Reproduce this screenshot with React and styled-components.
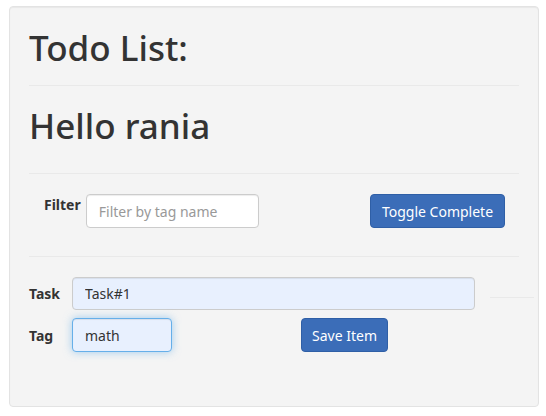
import React from "react";
import styled, { createGlobalStyle, css } from "styled-components";

const GlobalStyle = createGlobalStyle`
  body {
    margin: 0;
    background: #fff;
    font-family: "Noto Sans", "Open Sans", sans-serif;
    color: #333;
    font-size: 14px;
  }
  * { box-sizing: border-box; }
`;

const Well = styled.div`
  margin: 6px 7px 0 9px;
  height: 401px;
  padding: 0 19px;
  background: #f4f4f4;
  border: 1px solid #e3e3e3;
  border-radius: 4px;
  box-shadow: inset 0 1px 1px rgba(0, 0, 0, 0.05);
`;

const Heading = styled.h1`
  margin: 0;
  padding: ${(p) => p.$top}px 0 0;
  height: ${(p) => p.$height}px;
  font-size: 35px;
  font-weight: 500;
  line-height: 40px;
  color: #333;
`;

const Rule = styled.hr`
  margin: 0;
  border: 0;
  border-top: 1px solid #e9e9e9;
`;

const FilterRow = styled.div`
  display: flex;
  align-items: flex-start;
  height: 82px;
  padding: 20px 14px 0 15px;
`;

const FilterLabel = styled.label`
  font-weight: 700;
  font-size: 14px;
  line-height: 20px;
  padding-top: 1px;
  margin-right: 5px;
`;

const Input = styled.input`
  flex-shrink: 0;
  height: ${(p) => p.$height || 34}px;
  width: ${(p) => p.$width}px;
  padding: 6px 12px;
  font: inherit;
  font-size: 14px;
  color: #333;
  background: ${(p) => (p.$filled ? "#e8f0fe" : "#fff")};
  border: 1px solid #ccc;
  border-radius: 4px;
  outline: none;
  box-shadow: inset 0 1px 1px rgba(0, 0, 0, 0.075);
  &::placeholder {
    color: #999;
  }
  ${(p) =>
    p.$focused &&
    css`
      border-color: #66afe9;
      box-shadow: inset 0 1px 1px rgba(0, 0, 0, 0.075),
        0 0 8px rgba(102, 175, 233, 0.6);
    `}
`;

const Button = styled.button`
  flex-shrink: 0;
  width: ${(p) => p.$width}px;
  height: 34px;
  padding: 6px 0;
  margin-left: ${(p) => p.$offset || 0}px;
  font: inherit;
  font-size: 14px;
  color: #fff;
  background: #3b6db8;
  border: 1px solid #2f5fa6;
  border-radius: 4px;
  cursor: pointer;
`;

const Spacer = styled.div`
  flex: 1;
`;

const Form = styled.div`
  padding-top: 20px;
  display: flex;
  flex-direction: column;
  gap: 8px;
`;

const FormRow = styled.div`
  display: flex;
  align-items: center;
`;

const FieldLabel = styled.label`
  flex-shrink: 0;
  width: 43px;
  font-weight: 700;
  font-size: 14px;
`;

const SideRule = styled.div`
  flex-shrink: 0;
  width: 44px;
  margin-left: 15px;
  border-top: 1px solid #e9e9e9;
  align-self: center;
  margin-top: 8px;
`;

export default function App() {
  return (
    <>
      <GlobalStyle />
      <Well>
        <Heading $top={21} $height={78}>Todo List:</Heading>
        <Rule />
        <Heading $top={20} $height={87}>Hello rania</Heading>
        <Rule />
        <FilterRow>
          <FilterLabel>Filter</FilterLabel>
          <Input $width={173} placeholder="Filter by tag name" />
          <Spacer />
          <Button $width={135}>Toggle Complete</Button>
        </FilterRow>
        <Rule />
        <Form>
          <FormRow>
            <FieldLabel>Task</FieldLabel>
            <Input $width={403} $height={33} $filled defaultValue="Task#1" />
            <SideRule />
          </FormRow>
          <FormRow>
            <FieldLabel>Tag</FieldLabel>
            <Input $width={100} $filled $focused defaultValue="math" autoFocus />
            <Button $width={87} $offset={129}>Save Item</Button>
          </FormRow>
        </Form>
      </Well>
    </>
  );
}
